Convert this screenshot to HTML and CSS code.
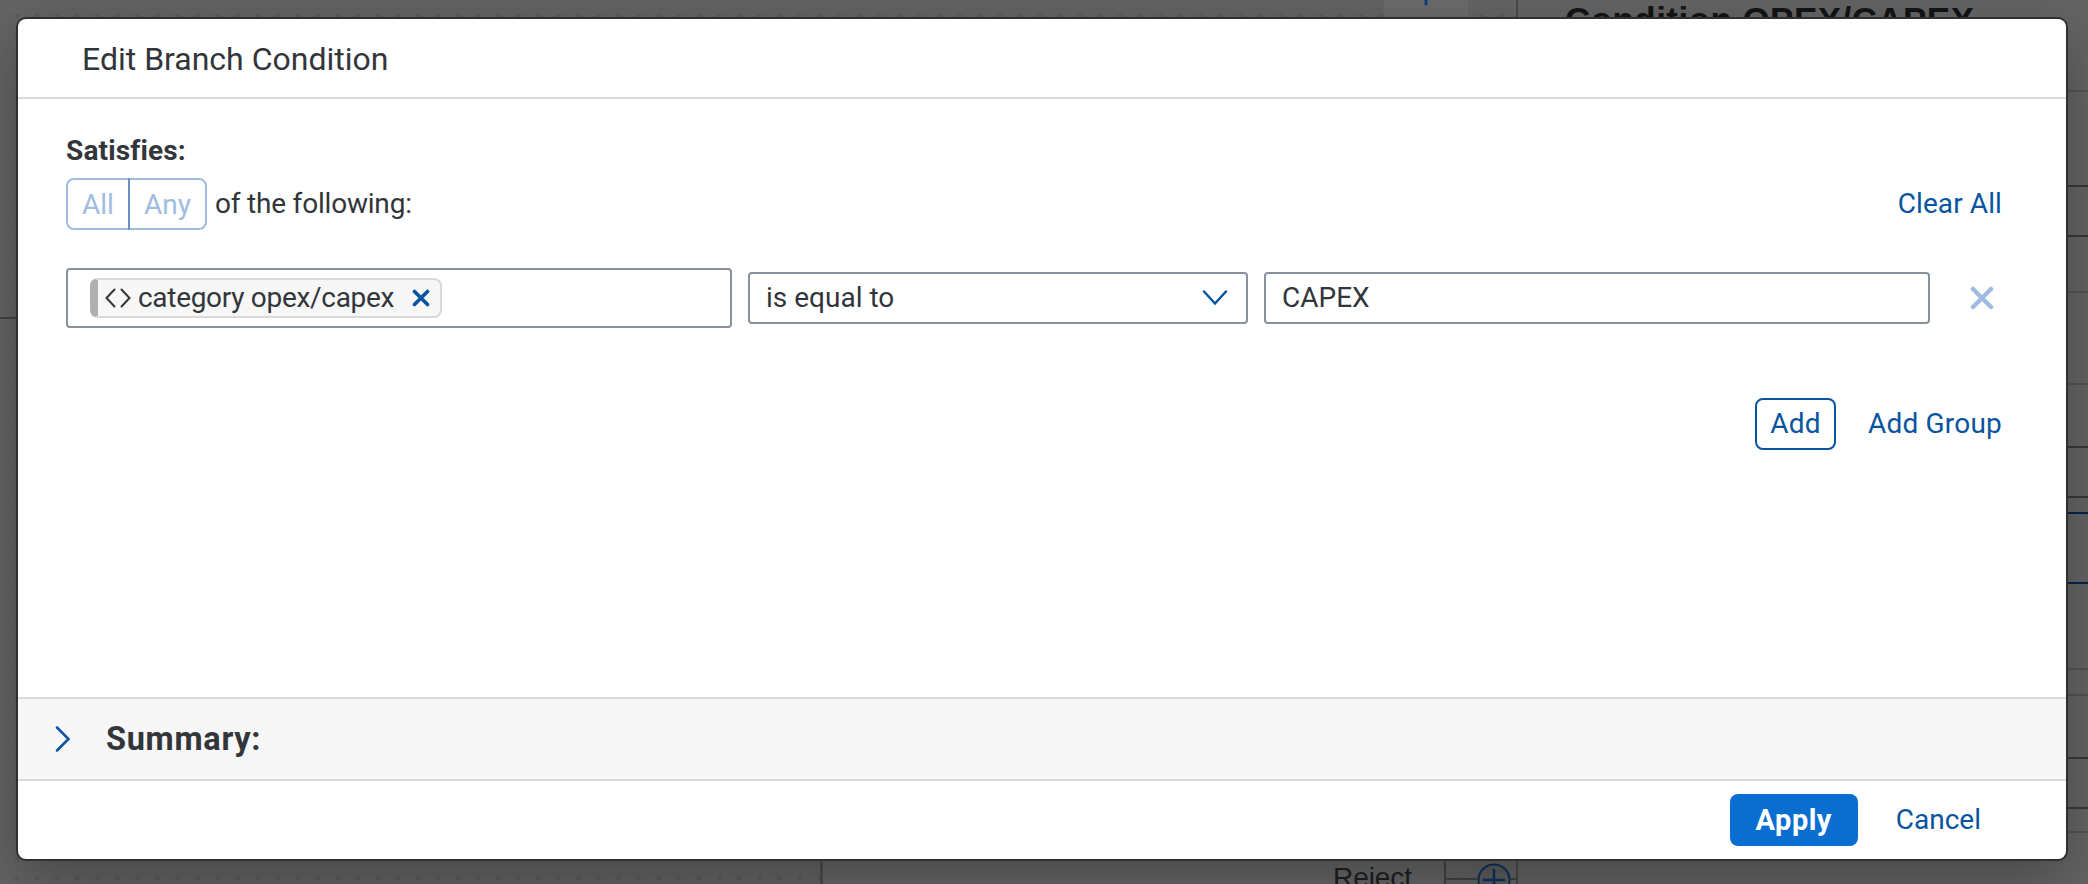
FILE: index.html
```
<!DOCTYPE html>
<html lang="en">
<head>
<meta charset="utf-8">
<title>Edit Branch Condition</title>
<link rel="stylesheet" href="styles.css">
</head>
<body>
<svg class="canvas" width="2088" height="884" viewBox="0 0 2088 884" aria-hidden="true">
  <defs>
    <pattern id="dots" x="15" y="14" width="20.06" height="20.06" patternUnits="userSpaceOnUse">
      <rect width="4" height="4" fill="#5b5b5b"/>
    </pattern>
  </defs>
  <rect width="1517" height="884" fill="url(#dots)"/>
  <rect x="822" y="840" width="623" height="44" fill="#666"/>
  <rect x="1384" y="0" width="84" height="30" fill="#6b6b6b"/>
  <path d="M1426 0v4" stroke="#0a3f7e" stroke-width="3"/>
  <path d="M0 318h30M821.500 850v34M1445 850v34M1445 879h72" stroke="#434343" stroke-width="2" fill="none"/>
  <path d="M1517 0v884" stroke="#404040" stroke-width="1.500"/>
  <circle cx="1494" cy="880" r="15.500" fill="#5d5d5d" stroke="#0c3360" stroke-width="2"/>
  <path d="M1484 880h20M1494 870v20" stroke="#0c3360" stroke-width="2.500"/>
  <path d="M2060 91h28M2060 292h28M2060 384h28M2060 669h28M2060 695h28M2060 832h28" stroke="#535353" stroke-width="2"/>
  <path d="M2060 186h28M2060 236h28M2060 447h28M2060 497h28M2060 758h28M2060 808h28" stroke="#373a3d" stroke-width="2"/>
  <path d="M2060 513h28M2060 583h28" stroke="#04234a" stroke-width="2"/>
  <text class="panel-title" x="1565" y="32" textLength="409">Condition OPEX/CAPEX</text>
  <text class="node-label" x="1333" y="887" textLength="79">Reject</text>
</svg>

<section class="dialog" role="dialog" aria-labelledby="title">
  <header class="dialog-header"><h1 class="title" id="title">Edit Branch Condition</h1></header>
  <main class="dialog-body">
    <div class="label">Satisfies:</div>
    <div class="match-row">
      <div class="segmented"><span class="segment seg-all">All</span><span class="segment seg-any">Any</span></div>
      <span class="following">of the following:</span>
      <span class="link clear-all">Clear All</span>
    </div>
    <div class="condition">
      <div class="field field-tall">
        <span class="token">
          <svg class="code-icon" width="26" height="20" viewBox="0 0 26 20"><path d="M9.500 1.500L1.500 10L9.500 18.500M16.500 1.500L24.500 10L16.500 18.500"/></svg>
          <span class="token-text">category opex/capex</span>
          <svg class="token-x" width="18" height="18" viewBox="0 0 18 18"><path d="M2.500 2.500L15.500 15.500M15.500 2.500L2.500 15.500"/></svg>
        </span>
      </div>
      <div class="field select">
        <span class="select-text">is equal to</span>
        <svg class="chevron" width="26" height="16" viewBox="0 0 26 16"><path d="M2 1.500L13 13.500L24 1.500"/></svg>
      </div>
      <div class="field value"><span class="value-text">CAPEX</span></div>
      <svg class="remove" width="24" height="24" viewBox="0 0 24 24"><path d="M3 3L21 21M21 3L3 21"/></svg>
    </div>
    <div class="add-row">
      <span class="button add">Add</span>
      <span class="link add-group">Add Group</span>
    </div>
  </main>
  <div class="summary">
    <svg class="expand" width="16" height="26" viewBox="0 0 16 26"><path d="M2 1.500L13.500 13L2 24.500"/></svg>
    <h2 class="summary-title">Summary:</h2>
  </div>
  <footer class="dialog-footer">
    <span class="button apply">Apply</span>
    <span class="link cancel">Cancel</span>
  </footer>
</section>
</body>
</html>
```
FILE: styles.css
```
* { box-sizing: border-box; }
body {
  margin: 0;
  width: 2088px;
  height: 884px;
  padding: 19px 22px 25px 18px;
  overflow: hidden;
  background: #646464;
  color: #32363a;
  font: 28px/34px Roboto, "Liberation Sans", sans-serif;
  white-space: nowrap;
}
.canvas { position: absolute; left: 0; top: 0; }
.panel-title { font: bold 35px "Liberation Sans", sans-serif; fill: #131415; }
.node-label { font: 28px "Liberation Sans", sans-serif; fill: #1e1f20; }
.dialog {
  position: relative;
  display: flex;
  flex-direction: column;
  height: 840px;
  border-radius: 8px;
  background: #fff;
  box-shadow: 0 0 0 2px #303030, 0 20px 60px rgba(0, 0, 0, .3);
}
.dialog-header {
  height: 80px;
  padding: 22px 64px;
  border-bottom: 2px solid #d9d9d9;
}
.title { margin: 0; font-size: 32px; line-height: 37px; font-weight: 400; }
.dialog-body { flex: 1; padding: 35px 64px 0 48px; }
.label { font-weight: 700; height: 44px; letter-spacing: .15px; }
.match-row { display: flex; align-items: center; height: 52px; }
.segmented {
  display: flex;
  width: 141px;
  height: 52px;
  border: 2px solid #a0bce0;
  border-radius: 8px;
  color: #a0bce0;
  line-height: 49px;
  text-align: center;
}
.seg-all { width: 62px; border-right: 2px solid #6992c6; margin: -2px 0; padding: 2px 0; }
.seg-any { flex: 1; }
.following { margin-left: 8px; letter-spacing: -.2px; }
.link { color: #0854a0; }
.clear-all { margin-left: auto; letter-spacing: .1px; }
.condition {
  display: grid;
  grid-template-columns: 666px 500px 666px 24px;
  column-gap: 16px;
  align-items: center;
  height: 60px;
  margin-top: 38px;
}
.field {
  display: flex;
  align-items: center;
  height: 52px;
  border: 2px solid #89919a;
  border-radius: 4px;
  padding: 0 16px;
}
.field-tall { height: 60px; padding: 0 22px; }
.token {
  display: flex;
  align-items: center;
  width: 352px;
  height: 40px;
  border: 2px solid #d9d9d9;
  border-left: 8px solid #b0b0b0;
  border-radius: 8px;
  background: #f7f7f7;
  padding-left: 7px;
}
svg path { stroke-linecap: round; }
.code-icon { fill: none; stroke: #32363a; stroke-width: 2; }
.token-text { margin-left: 7px; width: 257px; letter-spacing: -.3px; }
.token-x { margin-left: 17px; stroke: #0854a0; stroke-width: 3.700px; flex: none; }
.chevron { margin-left: auto; margin-right: 2px; fill: none; stroke: #0854a0; stroke-width: 2.500px; }
.remove { margin-left: 24px; stroke: #a0bce0; stroke-width: 4.500px; }
.add-row { display: flex; align-items: center; justify-content: flex-end; margin-top: 70px; gap: 32px; }
.add-group { letter-spacing: .2px; }
.button { border-radius: 8px; height: 52px; text-align: center; }
.add { width: 81px; border: 2px solid #0854a0; color: #0854a0; line-height: 48px; letter-spacing: .2px; }
.summary {
  display: flex;
  align-items: center;
  height: 84px;
  padding-left: 37px;
  background: #f7f7f7;
  border-top: 2px solid #d9d9d9;
  border-bottom: 2px solid #d9d9d9;
}
.expand { fill: none; stroke: #0854a0; stroke-width: 2.500px; }
.summary-title { margin: 0 0 0 35px; font-size: 32.500px; line-height: 38px; letter-spacing: .7px; }
.dialog-footer { display: flex; align-items: center; justify-content: flex-end; height: 78px; padding-right: 85px; gap: 38px; }
.apply { width: 128px; background: #0a6ed1; color: #fff; font-weight: 700; font-size: 29px; line-height: 52px; letter-spacing: .5px; }
```
